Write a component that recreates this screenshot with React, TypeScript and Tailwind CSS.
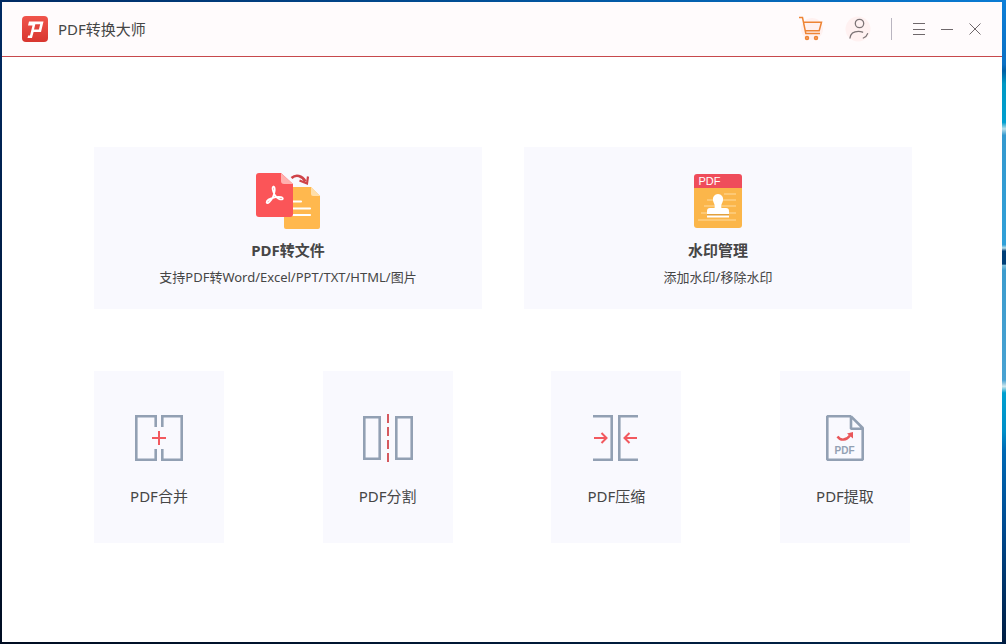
import React from 'react';

interface Tool {
  title: string;
  icon: React.ReactNode;
}

interface FeaturedTool extends Tool {
  description: string;
}

const LogoIcon = () => (
  <svg className="w-[26px] h-[26px]" viewBox="0 0 26 26" fill="none" aria-hidden="true">
    <defs>
      <linearGradient id="logo" x1="0" y1="0" x2="0" y2="1">
        <stop offset="0" stopColor="#f0544b" />
        <stop offset="1" stopColor="#d8362f" />
      </linearGradient>
    </defs>
    <rect width="26" height="26" rx="4" fill="url(#logo)" />
    <path d="M7 5.500H21.500L19 16H11.600L10 22H5.500L6.200 19.500H8L10.500 9.500H6Z" fill="#fff" />
    <path d="M13.300 8.200H18.200L16.900 13.400H12Z" fill="#e2453d" />
  </svg>
);

const CartIcon = () => (
  <svg className="w-7 h-7" viewBox="0 0 28 28" fill="none" stroke="#ee8434" strokeWidth="1.5" aria-hidden="true">
    <circle cx="15" cy="14" r="11" fill="#fff1f0" stroke="none" />
    <path d="M2 2.500H5.500L8.800 18.500H23M6.500 7.200H24.500L22.200 15.800H8.300" />
    <circle cx="10" cy="23" r="1.500" fill="#f6b184" />
    <circle cx="19" cy="23" r="1.500" fill="#f6b184" />
  </svg>
);

const UserIcon = () => (
  <svg className="w-7 h-7" viewBox="0 0 28 28" fill="none" stroke="#7d7476" strokeWidth="1.3" strokeLinecap="round" aria-hidden="true">
    <circle cx="13" cy="14" r="12.5" fill="#fff1f1" stroke="none" />
    <circle cx="14.5" cy="8.500" r="4.200" />
    <path d="M5 23C5.500 18.500 9 16.300 13.500 16.300C15.300 16.300 16.300 16.600 17.600 17.200M18.300 23C20.300 22.300 21.900 20.800 22.600 18.600" />
  </svg>
);

const ConvertIcon = () => (
  <svg className="w-16 h-15" viewBox="0 0 64 60" fill="none" aria-hidden="true">
    <path d="M30 16H55L64 25V56a2 2 0 0 1-2 2H30a2 2 0 0 1-2-2V18a2 2 0 0 1 2-2Z" fill="#ffb84e" />
    <path d="M55 16L64 25H57a2 2 0 0 1-2-2Z" fill="#ffdfab" />
    <path d="M37 30.500H45M37 37.500H54M37 44H54" stroke="#fff" strokeWidth="2.200" strokeLinecap="round" />
    <path d="M3 2H25L37 13V43a3 3 0 0 1-3 3H3a3 3 0 0 1-3-3V5a3 3 0 0 1 3-3Z" fill="#fb5558" />
    <path d="M25 2L37 13H28a3 3 0 0 1-3-3Z" fill="#ffb0ae" />
    <path
      d="M17.500 15.500C15.800 16 16.600 20 18.600 23.800C20.700 27.200 24.500 29.200 26.600 28.200C28 26.400 23.700 25.200 19.500 26.200C15 27.200 10.500 29.400 10.600 31.400C11.600 33.800 15.200 29.700 17 25.800C18.900 21.500 19.600 16.300 17.500 15.500Z"
      stroke="#fff"
      strokeWidth="1.700"
    />
    <path d="M35.500 7C40 3 46 4.500 49.500 10.500" stroke="#cf4349" strokeWidth="2.600" />
    <path d="M43.500 9.500L51 12.500L52 5.500" stroke="#cf4349" strokeWidth="2.200" />
  </svg>
);

const WatermarkIcon = () => (
  <svg className="w-16 h-15" viewBox="0 0 64 60" fill="none" aria-hidden="true">
    <path d="M8 17H56V54a3 3 0 0 1-3 3H11a3 3 0 0 1-3-3Z" fill="#fbb64a" />
    <path d="M11 3H53a3 3 0 0 1 3 3V17H8V6a3 3 0 0 1 3-3Z" fill="#ef4d5b" />
    <text x="12.500" y="14" fill="#fff" fontSize="11" fontFamily="Liberation Sans, Arial, sans-serif">PDF</text>
    <path d="M38 23H50M21 29H50M18 35H50M15 42H50M12 49H50" stroke="#ffdc9f" />
    <path
      d="M32 23a5.200 5.200 0 0 0-5 6.500C27.600 32.300 29.500 34 28.500 37H24a3 3 0 0 0-3 3V43H43V40a3 3 0 0 0-3-3H35.500C34.500 34 36.400 32.300 37 29.500A5.200 5.200 0 0 0 32 23Z"
      fill="#fff"
    />
    <path d="M21 43H43V45H21Z" fill="#e2a03c" />
    <path d="M21 44.500H43V46.500H21Z" fill="#fff" />
  </svg>
);

const MergeIcon = () => (
  <svg className="w-[54px] h-[54px]" viewBox="0 0 54 54" fill="none" strokeWidth="2.600" aria-hidden="true">
    <path d="M23.700 16V5.300H4.300V48.700H23.700V38M30.300 16V5.300H49.700V48.700H30.300V38" stroke="#92a0b3" />
    <path d="M20 27H34M27 20V34" stroke="#f2595f" strokeWidth="2" />
  </svg>
);

const SplitIcon = () => (
  <svg className="w-[54px] h-[54px]" viewBox="0 0 54 54" fill="none" strokeWidth="2.600" aria-hidden="true">
    <path d="M3.300 6.300H18.700V47.700H3.300ZM35.300 6.300H50.700V47.700H35.300Z" stroke="#92a0b3" />
    <path d="M27 3V51" stroke="#d5595f" strokeWidth="2" strokeDasharray="9 4" />
  </svg>
);

const CompressIcon = () => (
  <svg className="w-[54px] h-[54px]" viewBox="0 0 54 54" fill="none" strokeWidth="2.600" aria-hidden="true">
    <path d="M4 5.300H22.700V48.700H4M49 5.300H30.300V48.700H49" stroke="#92a0b3" />
    <path d="M5 27H17.500M12.500 22L17.500 27L12.500 32M48 27H35.500M40.500 22L35.500 27L40.500 32" stroke="#f2595f" strokeWidth="2" />
  </svg>
);

const ExtractIcon = () => (
  <svg className="w-[54px] h-[54px]" viewBox="0 0 54 54" fill="none" strokeWidth="2.600" aria-hidden="true">
    <path d="M33 5.300H9.300V48.700H44.700V17L33 5.300V17.700H44.700" stroke="#92a0b3" strokeLinejoin="bevel" />
    <path d="M19.500 25.500C22.500 30 28.500 29.500 32 24.500" stroke="#e9575a" strokeWidth="2.400" />
    <path d="M29 22.500L35 21L35 27.500Z" fill="#e9575a" />
    <text x="16.500" y="43" fill="#92a0b3" fontSize="10" fontWeight="bold" fontFamily="Liberation Sans, Arial, sans-serif">PDF</text>
  </svg>
);

const featuredTools: FeaturedTool[] = [
  { title: 'PDF转文件', description: '支持PDF转Word/Excel/PPT/TXT/HTML/图片', icon: <ConvertIcon /> },
  { title: '水印管理', description: '添加水印/移除水印', icon: <WatermarkIcon /> },
];

const tools: Tool[] = [
  { title: 'PDF合并', icon: <MergeIcon /> },
  { title: 'PDF分割', icon: <SplitIcon /> },
  { title: 'PDF压缩', icon: <CompressIcon /> },
  { title: 'PDF提取', icon: <ExtractIcon /> },
];

const windowControls = [
  { label: '菜单', path: 'M1 1.500H13M1 7.500H13M1 12.500H13' },
  { label: '最小化', path: 'M1 7.500H13' },
  { label: '关闭', path: 'M1.500 1.500L12.500 12.500M12.500 1.500L1.500 12.500' },
];

const TitleBar = () => (
  <header className="flex items-center h-[55px] pl-5 pr-[13px] bg-[#fffbfc] border-b border-[#c7484c]">
    <LogoIcon />
    <h1 className="ml-[10px] text-[15px]">PDF转换大师</h1>
    <div className="flex items-center ml-auto">
      <button type="button" aria-label="购物车" className="flex justify-center w-12">
        <CartIcon />
      </button>
      <button type="button" aria-label="账户" className="flex justify-center w-12">
        <UserIcon />
      </button>
      <div className="w-px h-[22px] ml-2 mr-[13px] bg-[#b9b5c0]" />
      {windowControls.map((control) => (
        <button key={control.label} type="button" aria-label={control.label} className="flex justify-center w-7">
          <svg className="w-[14px] h-[14px]" viewBox="0 0 14 14" fill="none" stroke="#6f686b" aria-hidden="true">
            <path d={control.path} />
          </svg>
        </button>
      ))}
    </div>
  </header>
);

export default function App() {
  return (
    <div className="flex min-h-screen text-[#464646] font-['Noto_Sans','Noto_Sans_CJK_SC',sans-serif]">
      <div className="w-0.5 bg-linear-to-b from-[#002a63] to-[#000d22]" />
      <div className="flex flex-col flex-1">
        <div className="h-0.5 bg-linear-to-r from-[#002a63] to-[#0a7bd3]" />
        <div className="flex-1 bg-white">
          <TitleBar />
          <main className="pt-[90px] pl-[92px] pr-[90px] pb-10">
            <div className="grid grid-cols-2 gap-[42px]">
              {featuredTools.map((tool) => (
                <button key={tool.title} type="button" className="flex flex-col items-center pt-6 pb-[18px] bg-[#f9f9fe]">
                  {tool.icon}
                  <span className="mt-1.5 text-[15px] leading-[26px] font-bold">{tool.title}</span>
                  <span className="text-[13px] leading-7">{tool.description}</span>
                </button>
              ))}
            </div>
            <div className="flex justify-between mt-[62px] pr-0.5">
              {tools.map((tool) => (
                <button key={tool.title} type="button" className="flex flex-col items-center w-[130px] pt-10 pb-9 bg-[#f9f9fe]">
                  {tool.icon}
                  <span className="mt-5 text-[15px] leading-[22px]">{tool.title}</span>
                </button>
              ))}
            </div>
          </main>
        </div>
        <div className="h-0.5 bg-linear-to-r from-[#000d22] to-[#00254d]" />
      </div>
      {/* Desktop edge visible beside the window */}
      <div className="w-1 bg-[linear-gradient(to_bottom,#0d7fd8_0%,#0b70c4_10%,#005fa5_11%,#0099c4_13%,#009fcf_19%,#b8dfea_20%,#3499cf_21%,#30a0d8_38%,#b8dfea_38.5%,#003f78_39%,#003f78_41%,#7fc0dc_41.2%,#3c9cce_42%,#48a2d2_59%,#d0e8ee_60%,#00a0d0_61%,#008fc8_67%,#0069b5_70%,#004a90_82%,#001c40_100%)]" />
    </div>
  );
}
